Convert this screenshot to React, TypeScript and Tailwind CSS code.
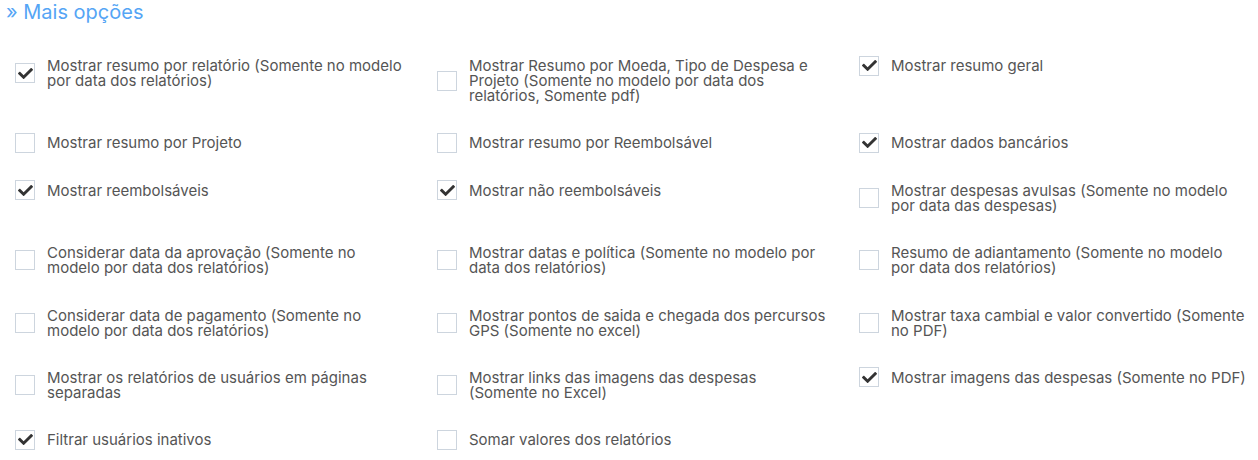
import React from 'react';

interface Option {
  label: string;
  checked: boolean;
}

const options: Option[] = [
  { label: 'Mostrar resumo por relatório (Somente no modelo por data dos relatórios)', checked: true },
  { label: 'Mostrar Resumo por Moeda, Tipo de Despesa e Projeto (Somente no modelo por data dos relatórios, Somente pdf)', checked: false },
  { label: 'Mostrar resumo geral', checked: true },
  { label: 'Mostrar resumo por Projeto', checked: false },
  { label: 'Mostrar resumo por Reembolsável', checked: false },
  { label: 'Mostrar dados bancários', checked: true },
  { label: 'Mostrar reembolsáveis', checked: true },
  { label: 'Mostrar não reembolsáveis', checked: true },
  { label: 'Mostrar despesas avulsas (Somente no modelo por data das despesas)', checked: false },
  { label: 'Considerar data da aprovação (Somente no modelo por data dos relatórios)', checked: false },
  { label: 'Mostrar datas e política (Somente no modelo por data dos relatórios)', checked: false },
  { label: 'Resumo de adiantamento (Somente no modelo por data dos relatórios)', checked: false },
  { label: 'Considerar data de pagamento (Somente no modelo por data dos relatórios)', checked: false },
  { label: 'Mostrar pontos de saida e chegada dos percursos GPS (Somente no excel)', checked: false },
  { label: 'Mostrar taxa cambial e valor convertido (Somente no PDF)', checked: false },
  { label: 'Mostrar os relatórios de usuários em páginas separadas', checked: false },
  { label: 'Mostrar links das imagens das despesas (Somente no Excel)', checked: false },
  { label: 'Mostrar imagens das despesas (Somente no PDF)', checked: true },
  { label: 'Filtrar usuários inativos', checked: true },
  { label: 'Somar valores dos relatórios', checked: false },
];

const CheckBox: React.FC<{ checked: boolean }> = ({ checked }) => (
  // negative margins: the 20px box never makes a one-line row taller than its text
  <div className="-my-[2.5px] flex h-5 w-5 shrink-0 items-center justify-center border border-[#cdd5de] bg-white">
    {checked && (
      <svg viewBox="0 0 512 512" className="h-[15px] w-[15px]" fill="#333">
        <path d="M173.9 439.4L7.5 273c-10-10-10-26.2 0-36.2l36.2-36.2c10-10 26.2-10 36.2 0L192 312.7 432.1 72.6c10-10 26.2-10 36.2 0l36.2 36.2c10 10 10 26.2 0 36.2L210.1 439.4c-10 10-26.2 10-36.2 0z" />
      </svg>
    )}
  </div>
);

export default function App() {
  return (
    <div className="h-[460px] w-[1258px] bg-white [font-family:Inter,sans-serif]">
      <h3 className="pl-[6px] text-[20px] leading-[24px] font-normal text-[#55a5f5]">» Mais opções</h3>

      <div className="mt-[34px] grid grid-cols-[422px_422px_1fr] items-start gap-y-[32.4px] pl-[15px]">
        {options.map((opt) => (
          <label key={opt.label} className="flex items-center gap-3">
            <CheckBox checked={opt.checked} />
            <span className="w-[358px] text-[15px] leading-[15px] text-[#555]">{opt.label}</span>
          </label>
        ))}
      </div>
    </div>
  );
}
